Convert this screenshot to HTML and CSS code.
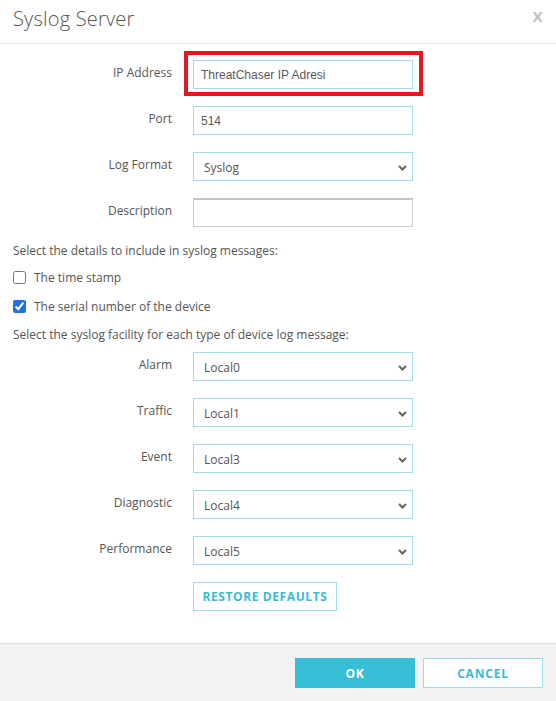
FILE: index.html
```html
<!DOCTYPE html>
<html lang="en">
<head>
<meta charset="utf-8">
<title>Syslog Server</title>
<link rel="stylesheet" href="styles.css">
</head>
<body>
<div class="dialog">
  <header class="dlg-head">
    <h1 class="dlg-title">Syslog Server</h1>
    <span class="dlg-close">X</span>
  </header>

  <main class="dlg-body">
    <div class="form-grid">
      <label class="lbl">IP Address</label>
      <div class="field highlight">
        <input class="txt" type="text" value="ThreatChaser IP Adresi">
        <span class="red-box"></span>
      </div>

      <label class="lbl">Port</label>
      <div class="field"><input class="txt" type="text" value="514"></div>

      <label class="lbl">Log Format</label>
      <div class="field sel-wrap">
        <select class="sel"><option>Syslog</option></select>
        <svg class="chev" width="9" height="6" viewBox="0 0 9 6"><path d="M1 1 L4.5 4.5 L8 1" fill="none" stroke="#666" stroke-width="2"/></svg>
      </div>

      <label class="lbl">Description</label>
      <div class="field"><input class="txt plain" type="text" value=""></div>
    </div>

    <p class="note note-1">Select the details to include in syslog messages:</p>
    <label class="chk-row"><input type="checkbox" class="chk"> The time stamp</label>
    <label class="chk-row"><input type="checkbox" class="chk" checked> The serial number of the device</label>
    <p class="note note-2">Select the syslog facility for each type of device log message:</p>

    <div class="form-grid">
      <label class="lbl">Alarm</label>
      <div class="field sel-wrap">
        <select class="sel"><option>Local0</option></select>
        <svg class="chev" width="9" height="6" viewBox="0 0 9 6"><path d="M1 1 L4.5 4.5 L8 1" fill="none" stroke="#666" stroke-width="2"/></svg>
      </div>

      <label class="lbl">Traffic</label>
      <div class="field sel-wrap">
        <select class="sel"><option>Local1</option></select>
        <svg class="chev" width="9" height="6" viewBox="0 0 9 6"><path d="M1 1 L4.5 4.5 L8 1" fill="none" stroke="#666" stroke-width="2"/></svg>
      </div>

      <label class="lbl">Event</label>
      <div class="field sel-wrap">
        <select class="sel"><option>Local3</option></select>
        <svg class="chev" width="9" height="6" viewBox="0 0 9 6"><path d="M1 1 L4.5 4.5 L8 1" fill="none" stroke="#666" stroke-width="2"/></svg>
      </div>

      <label class="lbl">Diagnostic</label>
      <div class="field sel-wrap">
        <select class="sel"><option>Local4</option></select>
        <svg class="chev" width="9" height="6" viewBox="0 0 9 6"><path d="M1 1 L4.5 4.5 L8 1" fill="none" stroke="#666" stroke-width="2"/></svg>
      </div>

      <label class="lbl">Performance</label>
      <div class="field sel-wrap">
        <select class="sel"><option>Local5</option></select>
        <svg class="chev" width="9" height="6" viewBox="0 0 9 6"><path d="M1 1 L4.5 4.5 L8 1" fill="none" stroke="#666" stroke-width="2"/></svg>
      </div>

      <span></span>
      <div class="field"><button class="btn btn-outline btn-restore">Restore Defaults</button></div>
    </div>
  </main>

  <footer class="dlg-foot">
    <button class="btn btn-primary">OK</button>
    <button class="btn btn-outline">Cancel</button>
  </footer>
</div>
</body>
</html>
```

FILE: styles.css
```css
* { box-sizing: border-box; }

html, body {
  margin: 0;
  padding: 0;
  background: #ffffff;
}

body {
  font-family: "Open Sans", "Noto Sans", sans-serif;
  font-size: 12px;
  color: #555;
}

.dialog {
  display: flex;
  flex-direction: column;
  width: 556px;
  height: 701px;
}

.dlg-head {
  display: flex;
  align-items: center;
  justify-content: space-between;
  height: 44px;
  padding: 0 13px 0 13px;
  border-bottom: 1px solid #e6e6e6;
}

.dlg-title {
  margin: 0;
  font-family: "Open Sans", sans-serif;
  font-weight: 300;
  font-size: 20px;
  color: #555;
  letter-spacing: 0.2px;
  padding-bottom: 6px;
}

.dlg-close {
  font-family: "DejaVu Sans", sans-serif;
  font-weight: bold;
  font-size: 14px;
  color: #c4c4c4;
  padding-bottom: 9px;
}

.dlg-body {
  flex: 1;
  padding: 16px 13px 0 13px;
}

.form-grid {
  display: grid;
  grid-template-columns: 159px 220px;
  column-gap: 21px;
  row-gap: 17px;
  align-items: center;
}

.lbl {
  text-align: right;
  color: #555;
  font-size: 12px;
  padding-bottom: 4px;
}

.field {
  position: relative;
  height: 29px;
}

.txt {
  width: 220px;
  height: 29px;
  border: 1px solid #9fdde7;
  padding: 0 7px;
  font-family: "Liberation Sans", Arial, sans-serif;
  font-size: 12px;
  color: #5a5a5a;
  outline: none;
  background: #fff;
}

.txt.plain {
  border: 1px solid #cccccc;
  border-top: 2px solid #c4c4c4;
}

.red-box {
  position: absolute;
  left: -9px;
  top: -9px;
  right: -10px;
  bottom: -7px;
  border: 4px solid #e8161e;
  pointer-events: none;
}

.sel-wrap { display: block; }

.sel {
  appearance: none;
  -webkit-appearance: none;
  width: 220px;
  height: 29px;
  border: 1px solid #9fdde7;
  border-radius: 0;
  background: #fff;
  padding: 2px 10px 0 10px;
  font-family: "Open Sans", sans-serif;
  font-size: 12px;
  color: #555;
  outline: none;
}

.chev {
  position: absolute;
  right: 6px;
  top: 13px;
  pointer-events: none;
}

.note {
  margin: 0;
  font-size: 12px;
  color: #555;
}

.note-1 { margin-top: 15px; }
.note-2 { margin-top: 12px; margin-bottom: 9px; }

.chk-row {
  display: flex;
  align-items: center;
  gap: 8px;
  height: 16px;
  margin-top: 10px;
  color: #555;
}
.chk-row + .chk-row { margin-top: 13px; }

.chk {
  margin: 0;
  width: 13px;
  height: 13px;
  accent-color: #1a73e8;
}

.btn {
  font-family: "Open Sans", sans-serif;
  font-weight: 700;
  font-size: 12px;
  letter-spacing: 0.8px;
  text-transform: uppercase;
  white-space: nowrap;
  cursor: pointer;
}

.btn-outline {
  background: #fff;
  border: 1px solid #9fdde7;
  color: #38bcd6;
}

.btn-primary {
  background: #38bed6;
  border: 1px solid #38bed6;
  color: #fff;
}

.btn-restore {
  height: 29px;
  padding: 0;
  width: 144px;
  letter-spacing: 0.6px;
}

.dlg-foot {
  display: flex;
  justify-content: flex-end;
  gap: 8px;
  height: 58px;
  padding: 14px 13px 0 0;
  background: #f3f3f3;
  border-top: 1px solid #dcdcdc;
}

.dlg-foot .btn {
  width: 120px;
  height: 30px;
}
```
